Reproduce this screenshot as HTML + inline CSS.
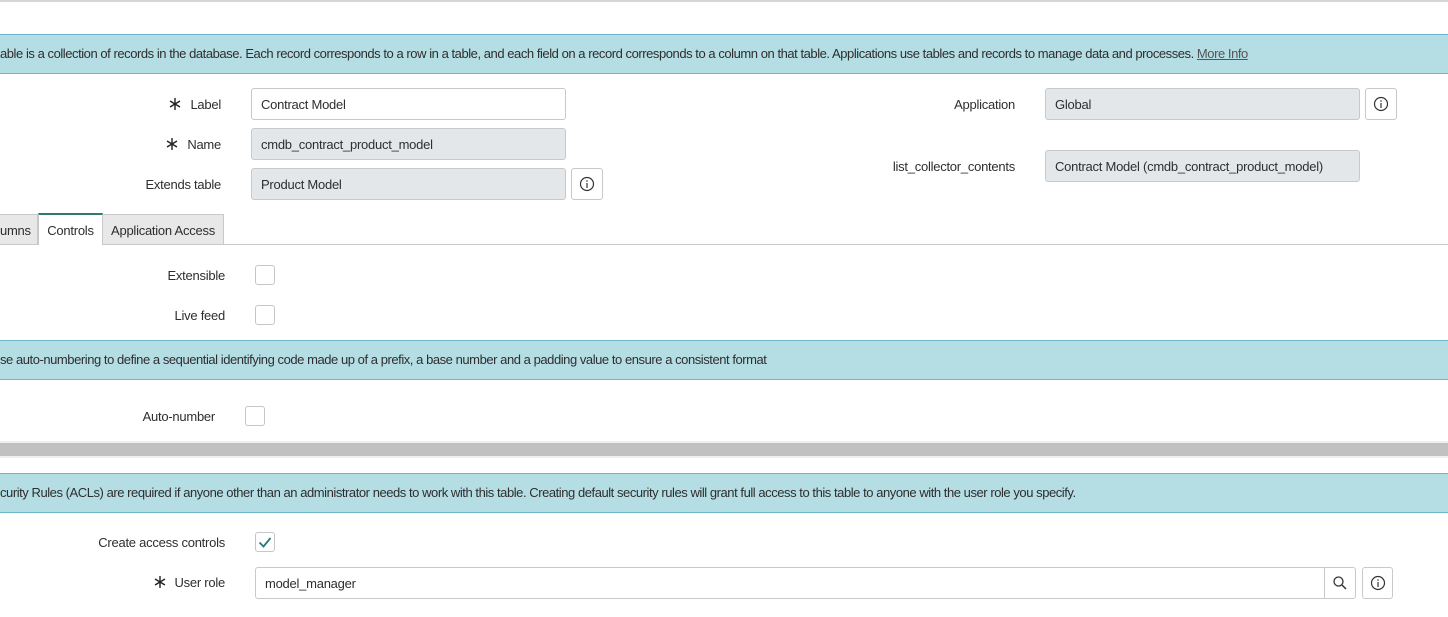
<!DOCTYPE html>
<html><head><meta charset="utf-8"><style>
body{margin:0;width:1448px;height:617px;position:relative;overflow:hidden;background:#fff;font-family:"Liberation Sans",sans-serif;font-size:13px;letter-spacing:-0.25px;color:#2e2e2e}
.a{position:absolute}
.banner{position:absolute;left:0;width:1448px;height:38px;background:#b5dde4;border-top:1px solid #6cb8cb;border-bottom:1px solid #6cb8cb;line-height:38px;white-space:nowrap;color:#2e2e2e;font-size:13px;letter-spacing:-0.45px}
.lbl{position:absolute;text-align:right;white-space:nowrap;line-height:20px;top:1px}
.in{position:absolute;box-sizing:border-box;height:32px;border:1px solid #c9c9c9;border-radius:3px;line-height:31px;padding-left:9px;white-space:nowrap;background:#fff}
.ro{background:#e4e7ea}
.btn{position:absolute;box-sizing:border-box;width:32px;height:32px;border:1px solid #c9c9c9;border-radius:3px;background:#fff}
.btn svg{position:absolute;left:7px;top:7px}
.cb{position:absolute;box-sizing:border-box;width:20px;height:20px;border:1px solid #c6c6c6;border-radius:3px;background:#fff}
.ast{display:inline-block;width:14px;height:14px;margin-right:8px;vertical-align:-2px}
</style></head><body>
<div class="a" style="left:0;top:0;width:1448px;height:2px;background:#d6d6d6"></div>
<div class="banner" style="top:34px;">able is a collection of records in the database. Each record corresponds to a row in a table, and each field on a record corresponds to a column on that table. Applications use tables and records to manage data and processes. <span style="text-decoration:underline;color:#555">More Info</span></div>

<div class="lbl" style="right:1227px;top:95px"><svg class="ast" viewBox="0 0 14 14"><path d="M7 1V13M2 4L12 10M2 10L12 4" stroke="#222" stroke-width="1.4"/></svg>Label</div>
<div class="in" style="left:251px;top:88px;width:315px">Contract Model</div>
<div class="lbl" style="right:1227px;top:135px"><svg class="ast" viewBox="0 0 14 14"><path d="M7 1V13M2 4L12 10M2 10L12 4" stroke="#222" stroke-width="1.4"/></svg>Name</div>
<div class="in ro" style="left:251px;top:128px;width:315px">cmdb_contract_product_model</div>
<div class="lbl" style="right:1227px;top:175px">Extends table</div>
<div class="in ro" style="left:251px;top:168px;width:315px">Product Model</div>
<div class="btn" style="left:571px;top:168px"><svg width="16" height="16" viewBox="0 0 16 16"><circle cx="8" cy="8" r="6.5" fill="none" stroke="#333" stroke-width="1.2"/><rect x="7.4" y="7" width="1.2" height="5" fill="#333"/><circle cx="8" cy="5" r=".8" fill="#333"/></svg></div>

<div class="lbl" style="right:433px;top:95px">Application</div>
<div class="in ro" style="left:1045px;top:88px;width:315px">Global</div>
<div class="btn" style="left:1365px;top:88px"><svg width="16" height="16" viewBox="0 0 16 16"><circle cx="8" cy="8" r="6.5" fill="none" stroke="#333" stroke-width="1.2"/><rect x="7.4" y="7" width="1.2" height="5" fill="#333"/><circle cx="8" cy="5" r=".8" fill="#333"/></svg></div>
<div class="lbl" style="right:433px;top:157px">list_collector_contents</div>
<div class="in ro" style="left:1045px;top:150px;width:315px">Contract Model (cmdb_contract_product_model)</div>

<div class="a" style="left:0;top:244px;width:1448px;height:1px;background:#c9c9c9"></div>
<div class="a" style="left:-1px;top:214px;width:39px;height:30px;background:#e8e8e8;border:1px solid #c9c9c9;border-bottom:none;line-height:31px;text-align:right;box-sizing:border-box;padding-right:8px">umns</div>
<div class="a" style="left:38px;top:213px;width:65px;height:32px;background:#fff;border-top:2px solid #2c7a72;border-left:1px solid #c9c9c9;border-right:1px solid #c9c9c9;box-sizing:border-box;line-height:32px;text-align:center">Controls</div>
<div class="a" style="left:103px;top:214px;width:121px;height:30px;background:#e8e8e8;border-top:1px solid #c9c9c9;border-right:1px solid #c9c9c9;box-sizing:border-box;line-height:31px;text-align:center">Application Access</div>

<div class="lbl" style="right:1223px;top:266px">Extensible</div>
<div class="cb" style="left:255px;top:265px"></div>
<div class="lbl" style="right:1223px;top:306px">Live feed</div>
<div class="cb" style="left:255px;top:305px"></div>

<div class="banner" style="top:340px">se auto-numbering to define a sequential identifying code made up of a prefix, a base number and a padding value to ensure a consistent format</div>
<div class="lbl" style="right:1233px;top:407px">Auto-number</div>
<div class="cb" style="left:245px;top:406px"></div>

<div class="a" style="left:0;top:441px;width:1448px;height:17px;background:#efefef"></div>
<div class="a" style="left:0;top:443px;width:1448px;height:13px;background:#c1c1c1"></div>

<div class="banner" style="top:473px">curity Rules (ACLs) are required if anyone other than an administrator needs to work with this table. Creating default security rules will grant full access to this table to anyone with the user role you specify.</div>
<div class="lbl" style="right:1223px;top:533px">Create access controls</div>
<div class="cb" style="left:255px;top:532px"><svg width="18" height="18" viewBox="0 0 18 18" style="position:absolute;left:0;top:0"><path d="M3.5 9.5 L7.5 13.5 L14.5 5" fill="none" stroke="#2c7a72" stroke-width="1.8"/></svg></div>
<div class="lbl" style="right:1223px;top:573px"><svg class="ast" viewBox="0 0 14 14"><path d="M7 1V13M2 4L12 10M2 10L12 4" stroke="#222" stroke-width="1.4"/></svg>User role</div>
<div class="in" style="left:255px;top:567px;width:1070px;border-radius:3px 0 0 3px">model_manager</div>
<div class="btn" style="left:1324px;top:567px;border-radius:0 3px 3px 0"><svg width="16" height="16" viewBox="0 0 16 16"><circle cx="6.5" cy="6.5" r="4.5" fill="none" stroke="#333" stroke-width="1.3"/><path d="M10 10 L14 14" stroke="#333" stroke-width="1.5"/></svg></div>
<div class="btn" style="left:1362px;top:567px;width:31px"><svg width="16" height="16" viewBox="0 0 16 16"><circle cx="8" cy="8" r="6.5" fill="none" stroke="#333" stroke-width="1.2"/><rect x="7.4" y="7" width="1.2" height="5" fill="#333"/><circle cx="8" cy="5" r=".8" fill="#333"/></svg></div>
</body></html>
